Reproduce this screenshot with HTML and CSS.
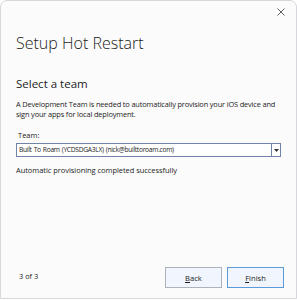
FILE: index.html
```html
<!DOCTYPE html>
<html lang="en">
<head>
    <meta charset="UTF-8">
    <meta name="viewport" content="width=device-width, initial-scale=1.0">
    <title>Setup Hot Restart</title>
    <link rel="stylesheet" href="styles.css">
</head>
<body>

    <div class="window">
        <div class="titlebar">
            <button class="close-btn" aria-label="Close">
                <svg width="8" height="8" viewBox="0 0 8 8">
                    <path d="M0.5 0.5 L7.5 7.5 M7.5 0.5 L0.5 7.5" stroke="#5f5f5f" stroke-width="1" fill="none"/>
                </svg>
            </button>
        </div>

        <div class="content">
            <h1>Setup Hot Restart</h1>
            <h2>Select a team</h2>
            <p class="description">A Development Team is needed to automatically provision your iOS device and sign your apps for local deployment.</p>

            <label class="field-label" for="team">Team:</label>
            <div class="combo" id="team">
                <span class="combo-text">Built To Roam (YCDSDGA3LX) (nick@builttoroam.com)</span>
                <span class="combo-arrow">
                    <svg width="5" height="3" viewBox="0 0 5 3"><path d="M0 0 H5 L2.5 3 Z" fill="#333"/></svg>
                </span>
            </div>

            <p class="status">Automatic provisioning completed successfully</p>
        </div>

        <div class="footer">
            <span class="step">3 of 3</span>
            <div class="button-group">
                <button class="btn"><u>B</u>ack</button>
                <button class="btn btn-default"><u>F</u>inish</button>
            </div>
        </div>
    </div>

</body>
</html>
```
FILE: styles.css
```css
html, body {
    margin: 0;
    padding: 0;
    background-color: #ffffff;
}
body {
    font-family: "Open Sans", "Noto Sans", sans-serif;
    color: #1b1b1b;
}
.window {
    box-sizing: border-box;
    width: 297px;
    height: 299px;
    background-color: #fbfbfb;
    border: 1px solid #d6d6dc;
    border-radius: 7px 7px 0 0;
    display: flex;
    flex-direction: column;
}
.titlebar {
    height: 22px;
    display: flex;
    justify-content: flex-end;
}
.close-btn {
    width: 30px;
    height: 22px;
    border: none;
    background: transparent;
    padding: 0;
    display: flex;
    align-items: center;
    justify-content: center;
}
.content {
    padding: 0 15px 0 15px;
}
h1 {
    font-size: 16px;
    font-weight: 300;
    margin: 9px 0 0 0;
    line-height: 22px;
    color: #1b1b1b;
}
h2 {
    font-size: 11.5px;
    font-weight: 400;
    margin: 22px 0 0 0;
    line-height: 16px;
}
.description {
    font-size: 7.4px;
    letter-spacing: -0.15px;
    line-height: 10px;
    margin: 7px 0 0 0;
}
.field-label {
    display: block;
    font-size: 7.5px;
    line-height: 10px;
    margin: 11px 0 0 2px;
}
.combo {
    box-sizing: border-box;
    height: 14px;
    margin-top: 3px;
    border: 1px solid #7183ab;
    background-color: #ffffff;
    display: flex;
    align-items: center;
}
.combo-text {
    flex-grow: 1;
    font-size: 6.7px;
    letter-spacing: -0.3px;
    word-spacing: 0.6px;
    line-height: 12px;
    padding-left: 2px;
}
.combo-arrow {
    width: 8px;
    height: 12px;
    border-left: 1px solid #7183ab;
    display: flex;
    align-items: center;
    justify-content: center;
}
.status {
    font-size: 7.5px;
    letter-spacing: -0.05px;
    line-height: 10px;
    margin: 8px 0 0 0;
}
.footer {
    margin-top: auto;
    padding: 0 12px 10px 18px;
    display: flex;
    align-items: center;
    justify-content: space-between;
}
.step {
    font-size: 7.4px;
    margin-top: -4px;
}
.button-group {
    display: flex;
    gap: 5px;
}
.btn {
    box-sizing: border-box;
    width: 57px;
    height: 21px;
    font-family: "Open Sans", "Noto Sans", sans-serif;
    font-size: 7.6px;
    color: #1b1b1b;
    background-color: #f1f5fd;
    border: 1px solid #adb3bd;
    padding: 0;
}
.btn u {
    text-decoration: underline;
}
.btn-default {
    border-color: #5d9ad8;
}
```
